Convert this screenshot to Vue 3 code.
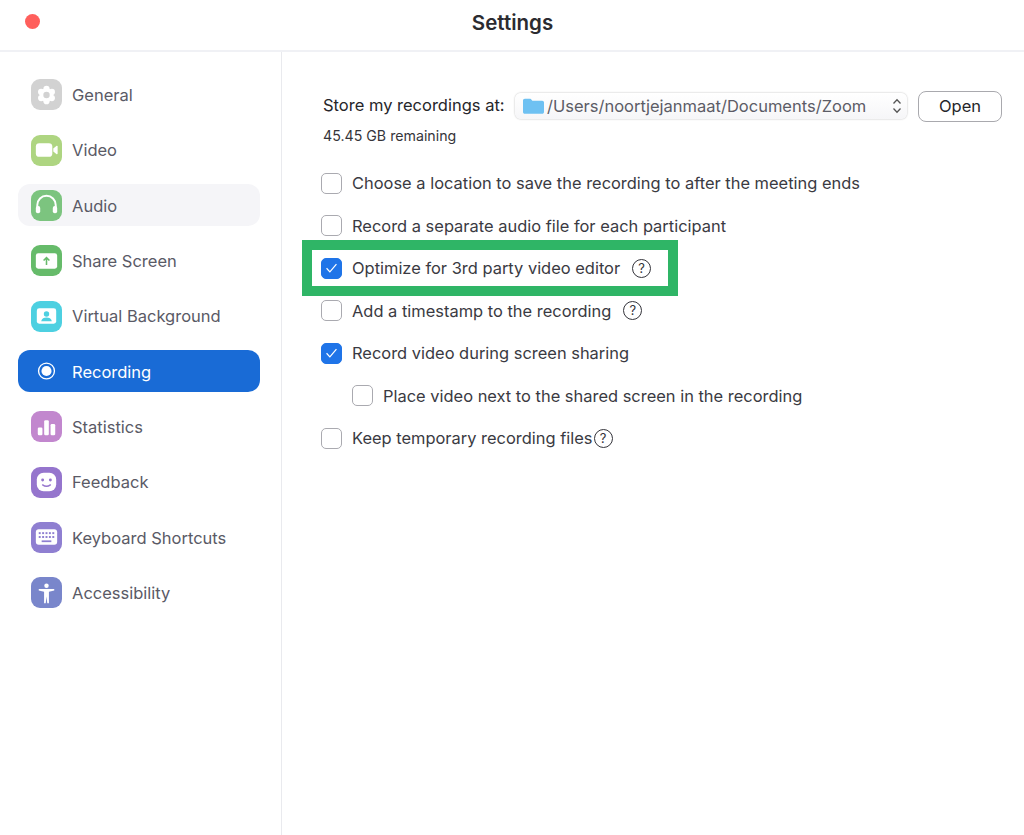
<script setup>
const nav = [
  { label: 'General', icon: 'general', color: '#d2d2d2' },
  { label: 'Video', icon: 'video', color: '#aed581' },
  { label: 'Audio', icon: 'audio', color: '#7cc47f', hover: true },
  { label: 'Share Screen', icon: 'share', color: '#66bb6a' },
  { label: 'Virtual Background', icon: 'virtual', color: '#4dd0e1' },
  { label: 'Recording', icon: 'recording', color: 'transparent', active: true },
  { label: 'Statistics', icon: 'stats', color: '#c287ce' },
  { label: 'Feedback', icon: 'feedback', color: '#9575cd' },
  { label: 'Keyboard Shortcuts', icon: 'keyboard', color: '#8f7fd1' },
  { label: 'Accessibility', icon: 'access', color: '#7986cb' }
]
const options = [
  { label: 'Choose a location to save the recording to after the meeting ends' },
  { label: 'Record a separate audio file for each participant' },
  { label: 'Optimize for 3rd party video editor', checked: true, help: 'spaced', highlight: true },
  { label: 'Add a timestamp to the recording', help: 'spaced' },
  { label: 'Record video during screen sharing', checked: true },
  { label: 'Place video next to the shared screen in the recording', indent: true },
  { label: 'Keep temporary recording files', help: 'tight' }
]
const gearLobes = [0, 60, 120, 180, 240, 300].map((deg) => ({
  x: 16 + 6.4 * Math.sin((deg * Math.PI) / 180),
  y: 16 - 6.4 * Math.cos((deg * Math.PI) / 180)
}))
</script>

<template>
  <div class="window">
    <header class="titlebar">
      <span class="close"></span>
      <h1 class="title">Settings</h1>
    </header>
    <div class="body">
      <nav class="sidebar">
        <div
          v-for="item in nav"
          :key="item.label"
          class="nav-item"
          :class="{ hover: item.hover, active: item.active }"
        >
          <span class="nav-icon" :style="{ background: item.color }">
            <svg viewBox="0 0 32 32" width="32" height="32">
              <template v-if="item.icon === 'general'">
                <circle v-for="(p, i) in gearLobes" :key="i" :cx="p.x" :cy="p.y" r="3.200" fill="#fff"/>
                <circle cx="16" cy="16" r="7" fill="#fff"/>
                <circle cx="16" cy="16" r="3.300" fill="#d2d2d2"/>
              </template>
              <template v-else-if="item.icon === 'video'">
                <rect x="5" y="9" width="17" height="14" rx="3.500" fill="#fff"/>
                <path fill="#fff" d="M23 14.500l3.200-2.700c.6-.5 1.300-.1 1.300.6v7.200c0 .7-.7 1.100-1.300.6L23 17.500z"/>
              </template>
              <template v-else-if="item.icon === 'audio'">
                <path fill="none" stroke="#fff" stroke-width="2" d="M6.500 20v-4a9.500 9.500 0 0 1 19 0v4"/>
                <rect x="5" y="17" width="4.500" height="7.500" rx="2" fill="#fff"/>
                <rect x="22.500" y="17" width="4.500" height="7.500" rx="2" fill="#fff"/>
              </template>
              <template v-else-if="item.icon === 'share'">
                <rect x="5" y="8" width="22" height="16" rx="2.500" fill="#fff"/>
                <path fill="none" stroke="#66bb6a" stroke-width="1.600" d="M16 20v-7M13 15.500l3-3 3 3"/>
              </template>
              <template v-else-if="item.icon === 'virtual'">
                <rect x="6" y="8" width="20" height="16" rx="2.500" fill="#fff"/>
                <circle cx="16" cy="14" r="2.800" fill="#4dd0e1"/>
                <path fill="#4dd0e1" d="M10.500 21.500c.6-3 2.800-4 5.500-4s4.900 1 5.500 4z"/>
              </template>
              <template v-else-if="item.icon === 'recording'">
                <circle cx="16" cy="16" r="8.200" fill="none" stroke="#fff" stroke-width="1.400"/>
                <circle cx="16" cy="16" r="5.200" fill="#fff"/>
              </template>
              <template v-else-if="item.icon === 'stats'">
                <rect x="7" y="16.500" width="4.800" height="8" rx="1.300" fill="#fff"/>
                <rect x="13.600" y="9" width="4.800" height="15.500" rx="1.300" fill="#fff"/>
                <rect x="20.200" y="13" width="4.800" height="11.500" rx="1.300" fill="#fff"/>
              </template>
              <template v-else-if="item.icon === 'feedback'">
                <rect x="6" y="6.500" width="20" height="19" rx="7" fill="#fff"/>
                <circle cx="12" cy="14" r="1.500" fill="#9575cd"/>
                <circle cx="20" cy="14" r="1.500" fill="#9575cd"/>
                <path fill="none" stroke="#9575cd" stroke-width="1.500" stroke-linecap="round" d="M12 19c2.300 1.700 5.700 1.700 8 0"/>
              </template>
              <template v-else-if="item.icon === 'keyboard'">
                <rect x="5" y="8" width="22" height="16" rx="3" fill="#fff"/>
                <g fill="#8f7fd1">
                  <rect x="8" y="11" width="2" height="2"/><rect x="11.500" y="11" width="2" height="2"/><rect x="15" y="11" width="2" height="2"/><rect x="18.500" y="11" width="2" height="2"/><rect x="22" y="11" width="2" height="2"/>
                  <rect x="8" y="15" width="2" height="2"/><rect x="11.500" y="15" width="2" height="2"/><rect x="15" y="15" width="2" height="2"/><rect x="18.500" y="15" width="2" height="2"/><rect x="22" y="15" width="2" height="2"/>
                  <rect x="11" y="19.500" width="10" height="1.800"/>
                </g>
              </template>
              <template v-else-if="item.icon === 'access'">
                <circle cx="16" cy="8.500" r="2.300" fill="#fff"/>
                <path fill="#fff" d="M8 11.800h16v1.700l-5.500 1.300V26.500h-1.700l-.8-7-.8 7h-1.700V14.800L8 13.500z"/>
              </template>
            </svg>
          </span>
          <span class="nav-label">{{ item.label }}</span>
        </div>
      </nav>

      <main class="content">
        <div class="store-row">
          <span class="store-label">Store my recordings at:</span>
          <div class="path-select">
            <svg class="folder" viewBox="0 0 22 18" width="22" height="18">
              <path fill="#6ec1f2" d="M1 3.500C1 2.400 1.800 1.700 2.800 1.700h5c.8 0 1.200.3 1.700 1l.8 1h9.900c1 0 1.800.8 1.800 1.800V15c0 1-.8 1.800-1.800 1.800H2.800C1.800 16.800 1 16 1 15z"/>
            </svg>
            <span class="path-text">/Users/noortjejanmaat/Documents/Zoom</span>
            <svg class="chevrons" viewBox="0 0 10 18" width="10" height="18">
              <path fill="none" stroke="#555" stroke-width="1.300" d="M1.500 6.500L5 2.800l3.500 3.700M1.500 11.500L5 15.200l3.500-3.700"/>
            </svg>
          </div>
          <button class="open-btn">Open</button>
        </div>
        <p class="remaining">45.45 GB remaining</p>

        <ul class="options">
          <li
            v-for="opt in options"
            :key="opt.label"
            class="option"
            :class="{ indent: opt.indent, highlight: opt.highlight }"
          >
            <span class="check" :class="{ checked: opt.checked }">
              <svg v-if="opt.checked" viewBox="0 0 20 20" width="20" height="20">
                <path fill="none" stroke="#fff" stroke-width="1.300" d="M4.800 10.300l3.500 3.700 6.900-8"/>
              </svg>
            </span>
            <span class="option-label">{{ opt.label }}</span>
            <span v-if="opt.help" class="help" :class="opt.help">?</span>
          </li>
        </ul>
      </main>
    </div>
  </div>
</template>

<style>
html, body { margin: 0; background: #fff; }
</style>

<style scoped>
.window {
  width: 1024px;
  height: 835px;
  background: #fff;
  display: flex;
  flex-direction: column;
  overflow: hidden;
  font-family: Inter, "Noto Sans", sans-serif;
  color: #2a2a30;
}
.titlebar {
  height: 50px;
  flex: none;
  position: relative;
  display: flex;
  align-items: center;
  justify-content: center;
  border-bottom: 2px solid #f0f1f5;
}
.close {
  position: absolute;
  left: 25px;
  top: 14px;
  width: 15px;
  height: 15px;
  border-radius: 50%;
  background: #ff5f5c;
}
.title {
  margin: 0 0 6px 1px;
  font-size: 20.500px;
  font-weight: 600;
  color: #2b2b30;
}
.body {
  flex: 1;
  display: flex;
  min-height: 0;
}
.sidebar {
  width: 282px;
  flex: none;
  box-sizing: border-box;
  border-right: 1px solid #e9eaee;
  padding: 21.800px 21px 0 18px;
  display: flex;
  flex-direction: column;
  gap: 13.330px;
}
.nav-item {
  height: 42px;
  border-radius: 12px;
  display: flex;
  align-items: center;
  padding-left: 13px;
  gap: 10px;
}
.nav-item.hover { background: #f5f5f8; }
.nav-item.active { background: #196bd6; }
.nav-icon {
  width: 31px;
  height: 31px;
  border-radius: 9px;
  display: flex;
  align-items: center;
  justify-content: center;
  flex: none;
}
.nav-label {
  font-size: 16.500px;
  color: #5a5a66;
  margin-top: 0.500px;
}
.active .nav-label { color: #fff; }
.content {
  flex: 1;
  padding: 38px 22px 0 41px;
}
.store-row {
  display: flex;
  align-items: center;
  height: 32px;
}
.store-label {
  font-size: 16.500px;
  color: #26262a;
  width: 192px;
  flex: none;
  margin-bottom: 2px;
  white-space: nowrap;
}
.path-select {
  width: 392px;
  height: 26px;
  box-sizing: border-box;
  border-radius: 6px;
  background: linear-gradient(#fff, #f6f6f8);
  box-shadow: 0 0 2px rgba(0, 0, 0, 0.3);
  display: flex;
  align-items: center;
  padding: 0 5px 0 7px;
  gap: 3px;
}
.path-text {
  flex: 1;
  font-size: 16.500px;
  color: #5c5c66;
  white-space: nowrap;
}
.open-btn {
  margin-left: 11px;
  width: 84px;
  height: 31px;
  box-sizing: border-box;
  background: #fff;
  border: 1px solid #a9a9ae;
  border-radius: 8px;
  font: inherit;
  font-size: 16.500px;
  color: #26262a;
  padding: 0;
}
.remaining {
  margin: 4px 0 0;
  font-size: 14.200px;
  line-height: 20px;
  color: #35353a;
}
.options {
  list-style: none;
  margin: 22px 0 0 -2px;
  padding: 0;
  display: flex;
  flex-direction: column;
  gap: 12.500px;
}
.option {
  height: 30px;
  display: flex;
  align-items: center;
  position: relative;
  font-size: 16.450px;
  color: #3a3a42;
}
.option.indent { padding-left: 31px; }
.option.highlight::before {
  content: "";
  position: absolute;
  left: -19px;
  top: -13px;
  width: 376px;
  height: 56px;
  box-sizing: border-box;
  border: 10px solid #2fb566;
  pointer-events: none;
}
.check {
  width: 21px;
  height: 21px;
  box-sizing: border-box;
  border: 1.500px solid #aaaab0;
  border-radius: 5px;
  flex: none;
  margin-right: 10px;
  background: #fff;
  display: flex;
  align-items: center;
  justify-content: center;
}
.check.checked {
  background: #1f74e8;
  border-color: #1f74e8;
}
.help {
  width: 19px;
  height: 19px;
  box-sizing: border-box;
  border: 1.300px solid #33333a;
  border-radius: 50%;
  font-size: 13px;
  line-height: 16.500px;
  text-align: center;
  color: #33333a;
  flex: none;
}
.help.spaced { margin-left: 12px; }
.help.tight { margin-left: 1px; }
</style>
